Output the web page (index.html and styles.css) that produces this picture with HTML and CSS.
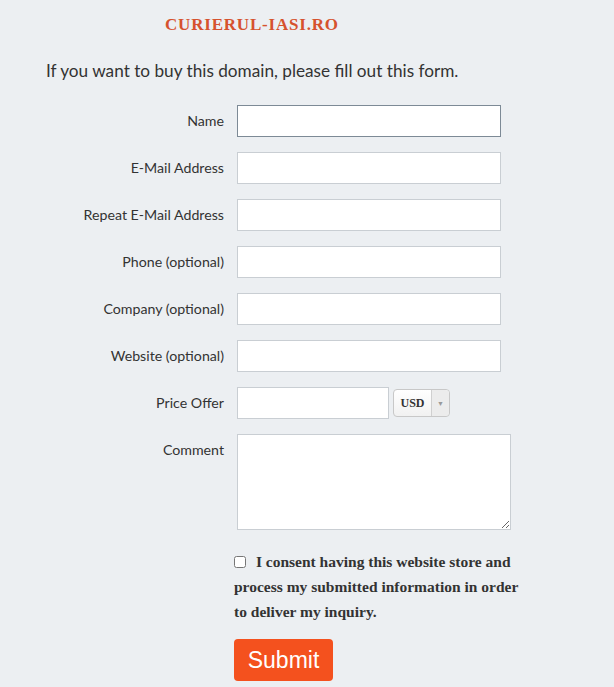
FILE: index.html
```html
<!DOCTYPE html>
<html>
<head>
<meta charset="utf-8">
<link rel="stylesheet" href="styles.css">
</head>
<body>
<div class="page">
  <h1 class="title">CURIERUL-IASI.RO</h1>
  <p class="intro">If you want to buy this domain, please fill out this form.</p>
  <form class="form">
    <label class="lbl">Name</label>
    <input class="inp focus" type="text">
    <label class="lbl">E-Mail Address</label>
    <input class="inp" type="text">
    <label class="lbl">Repeat E-Mail Address</label>
    <input class="inp" type="text">
    <label class="lbl">Phone (optional)</label>
    <input class="inp" type="text">
    <label class="lbl">Company (optional)</label>
    <input class="inp" type="text">
    <label class="lbl">Website (optional)</label>
    <input class="inp" type="text">
    <label class="lbl">Price Offer</label>
    <div class="price">
      <input class="inp small" type="text">
      <div class="select"><span class="cur">USD</span><span class="arrow">▼</span></div>
    </div>
    <label class="lbl">Comment</label>
    <textarea class="area"></textarea>
    <div class="spacer"></div>
    <div class="consent">
      <p class="ctext"><input type="checkbox" class="chk"> I consent having this website store and process my submitted information in order to deliver my inquiry.</p>
      <button type="button" class="submit">Submit</button>
    </div>
  </form>
</div>
</body>
</html>
```
FILE: styles.css
```css
html, body { margin: 0; padding: 0; }
body { background: #eceff2; font-family: "Lato", "Open Sans", sans-serif; color: #333; }
.page { width: 614px; height: 687px; overflow: hidden; }
.title {
  margin: 15px 0 0 165px;
  font-family: "Liberation Serif", serif;
  font-weight: bold;
  font-size: 17px;
  letter-spacing: 0.8px;
  color: #d6522e;
  line-height: 20px;
}
.intro {
  margin: 25px 0 0 46px;
  font-size: 17.2px;
  color: #333;
  line-height: 22px;
}
.form {
  margin-top: 23px;
  display: grid;
  grid-template-columns: 224px 1fr;
  column-gap: 13px;
  row-gap: 15px;
}
.lbl {
  text-align: right;
  font-size: 14.2px;
  color: #333;
  padding-top: 7px;
  line-height: 17px;
}
.inp {
  box-sizing: border-box;
  width: 264px;
  height: 32px;
  border: 1px solid #c9ced3;
  background: #fff;
  margin: 0;
}
.inp.focus { border-color: #7d8a96; }
.price { display: flex; align-items: center; gap: 4px; }
.inp.small { width: 152px; }
.select {
  box-sizing: border-box;
  width: 57px;
  height: 28px;
  border: 1px solid #c8c8c8;
  border-radius: 4px;
  background: linear-gradient(#fff, #f1f1f1);
  display: flex;
  align-items: center;
}
.cur {
  flex: 1;
  text-align: center;
  font-family: "Liberation Serif", serif;
  font-weight: bold;
  font-size: 12px;
  color: #333;
}
.arrow {
  width: 17px;
  height: 100%;
  border-left: 1px solid #d0d0d0;
  font-size: 7px;
  color: #999;
  display: flex;
  align-items: center;
  justify-content: center;
  background: #ececec;
  border-radius: 0 4px 4px 0;
}
.area {
  box-sizing: border-box;
  width: 274px;
  height: 96px;
  border: 1px solid #c9ced3;
  background: #fff;
  margin: 0;
}
.consent { margin-left: -3px; margin-top: 4px; }
.ctext {
  margin: 0;
  width: 300px;
  font-family: "Liberation Serif", serif;
  font-weight: bold;
  font-size: 15.5px;
  line-height: 25px;
  color: #333;
}
.chk { margin: 0 6px 0 0; width: 12px; height: 12px; vertical-align: -1px; }
.submit {
  margin-top: 15px;
  width: 99px;
  height: 42px;
  background: #f4511e;
  color: #fff;
  border: none;
  border-radius: 4px;
  font-family: "Liberation Sans", Arial, sans-serif;
  font-size: 23px;
  padding: 0;
}
```
